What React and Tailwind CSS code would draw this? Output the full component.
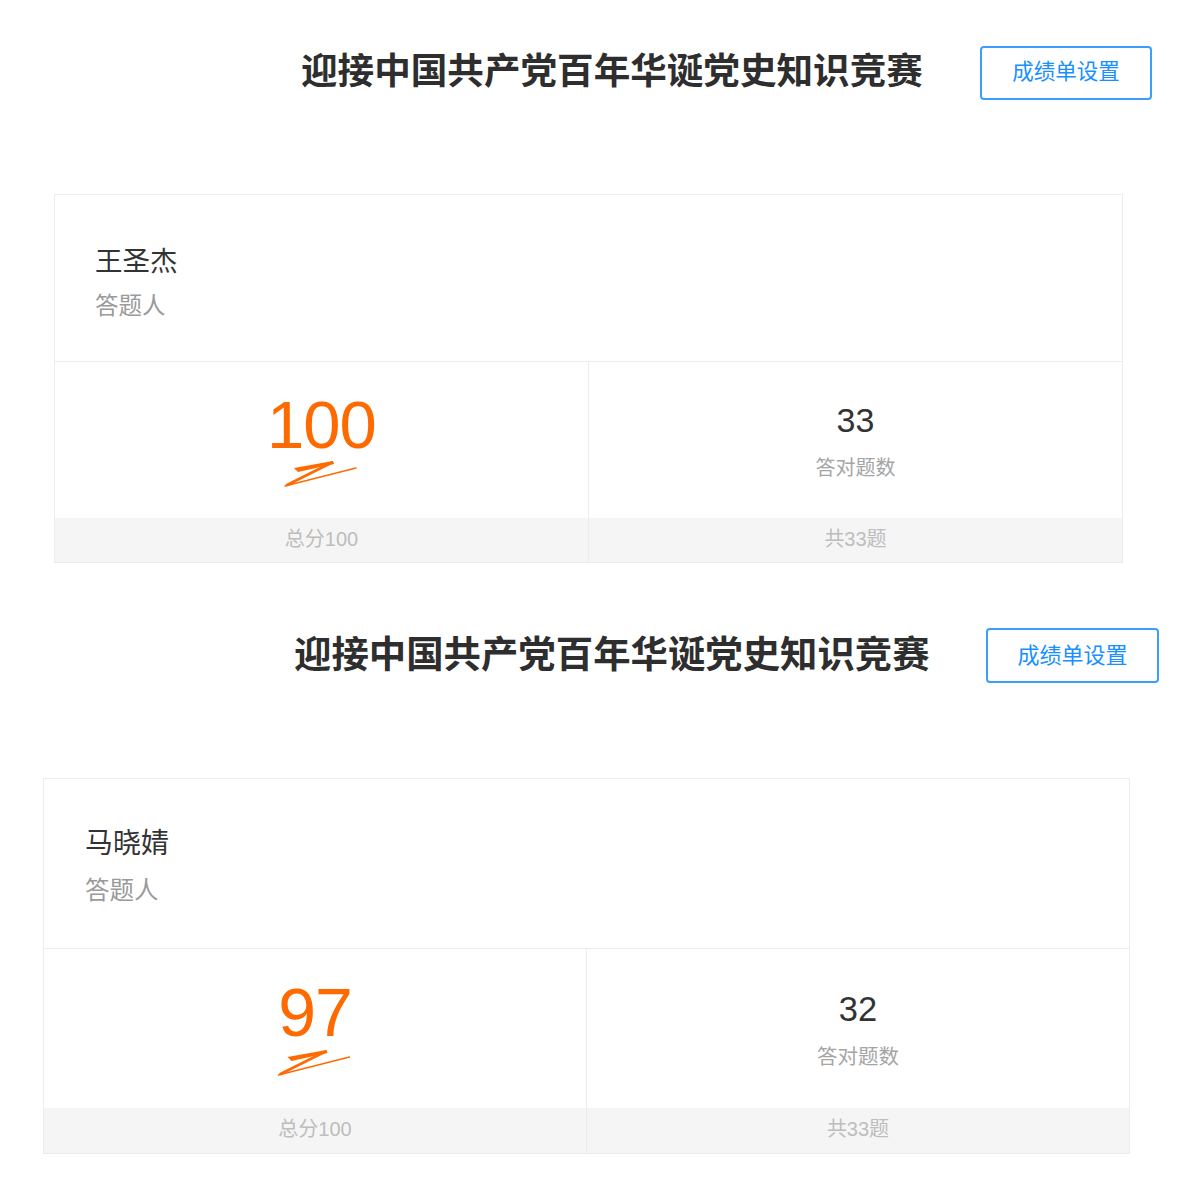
import React from "react";

const Squiggle = ({ cls }) => (
  <svg className={cls} viewBox="0 0 75 30" fill="none">
    <path d="M12 9 L51 2 L52 5 L16 13 Z" fill="#ff6a00" />
    <path d="M50 3.5 L5 26" stroke="#ff6a00" strokeWidth="2.6" strokeLinecap="round" />
    <path d="M3 27 L74 9" stroke="#ff6a00" strokeWidth="1.4" strokeLinecap="round" />
  </svg>
);

const Header = ({ c }) => (
  <div className={c.header + " flex items-center"}>
    <div className={c.title + " font-bold text-[#2e2e2e] whitespace-nowrap leading-none"}>
      迎接中国共产党百年华诞党史知识竞赛
    </div>
    <div
      className={
        c.btn +
        " flex items-center justify-center border-2 border-[#3d9dff] rounded-[4px] text-[#1890ff] bg-white"
      }
    >
      成绩单设置
    </div>
  </div>
);

const Card = ({ c, name, score, correct }) => (
  <div className={c.card + " border border-[#ececec] flex flex-col bg-white"}>
    <div className={c.top + " border-b border-[#ececec] flex flex-col"}>
      <div className={c.name + " text-[#333] leading-none"}>{name}</div>
      <div className={c.role + " text-[#9a9a9a] leading-none"}>答题人</div>
    </div>
    <div className="flex flex-1">
      <div className="flex-1 flex flex-col border-r border-[#ececec]">
        <div className={c.upper + " flex flex-col items-center"}>
          <div className={c.score + " text-[#ff6a00] leading-none"}>{score}</div>
          <Squiggle cls={c.squig} />
        </div>
        <div className={c.foot + " bg-[#f5f5f5] flex items-center justify-center text-[#bdbdbd] leading-none"}>
          <span className="-mt-[3px]">总分100</span>
        </div>
      </div>
      <div className="flex-1 flex flex-col">
        <div className={c.upper2 + " flex flex-col items-center"}>
          <div className={c.num + " text-[#333] leading-none"}>{correct}</div>
          <div className={c.numLabel + " text-[#a5a5a5] leading-none"}>答对题数</div>
        </div>
        <div className={c.foot + " bg-[#f5f5f5] flex items-center justify-center text-[#bdbdbd] leading-none"}>
          <span className="-mt-[3px]">共33题</span>
        </div>
      </div>
    </div>
  </div>
);

const c1 = {
  header: "h-[53px] mt-[46px] pl-[301px]",
  title: "text-[36.6px] w-[679px] mb-[1px]",
  btn: "w-[172px] h-[54px] text-[21.5px]",
  card: "ml-[54px] mt-[95px] w-[1069px] h-[369px]",
  top: "h-[167px] pl-[40px] pt-[53px]",
  name: "text-[27.5px]",
  role: "text-[23.5px] mt-[19px]",
  upper: "h-[156px] pt-[29px]",
  score: "text-[67px] tracking-[-1px]",
  squig: "w-[75px] h-[30px] mt-[1px] -ml-[4px]",
  upper2: "h-[156px] pt-[41px]",
  num: "text-[34px]",
  numLabel: "text-[20px] mt-[21px]",
  foot: "h-[44px] text-[20px]",
};

const c2 = {
  header: "h-[54px] mt-[65px] pl-[294px]",
  title: "text-[37.4px] w-[692px] mt-[1px]",
  btn: "w-[173px] h-[55px] text-[22px]",
  card: "ml-[43px] mt-[96px] w-[1087px] h-[376px]",
  top: "h-[170px] pl-[41px] pt-[51px]",
  name: "text-[28px]",
  role: "text-[24.5px] mt-[21px]",
  upper: "h-[159px] pt-[29px]",
  score: "text-[68px] tracking-[-1px]",
  squig: "w-[76px] h-[30px] mt-[2px] -ml-[4px]",
  upper2: "h-[159px] pt-[43px]",
  num: "text-[34.5px]",
  numLabel: "text-[20.5px] mt-[20px]",
  foot: "h-[45px] text-[20px]",
};

export default function App() {
  return (
    <div className="w-[1200px] h-[1200px] bg-white overflow-hidden font-['Liberation_Sans','Noto_Sans_CJK_SC',sans-serif]">
      <Header c={c1} />
      <Card c={c1} name="王圣杰" score="100" correct="33" />
      <Header c={c2} />
      <Card c={c2} name="马晓婧" score="97" correct="32" />
    </div>
  );
}
